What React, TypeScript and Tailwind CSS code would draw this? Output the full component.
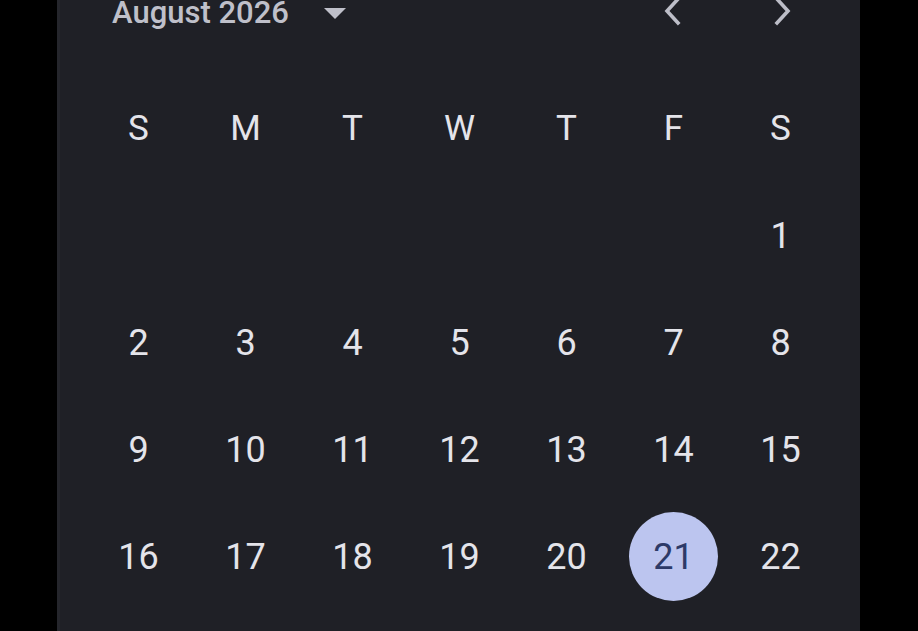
const weekDays = ['S', 'M', 'T', 'W', 'T', 'F', 'S']

// August 2026 starts on a Saturday; only the weeks that fit on screen
const cells: (number | null)[] = [
  ...Array(6).fill(null),
  ...Array.from({ length: 22 }, (_, i) => i + 1),
]

const selected = 21

function Chevron({ dir }: { dir: 'left' | 'right' }) {
  return (
    <svg className="-mt-[4px]" width="24" height="30" viewBox="0 0 24 30" fill="none">
      <polyline
        points={dir === 'left' ? '16,3 5,15 16,27' : '8,3 19,15 8,27'}
        stroke="#bdbec8"
        strokeWidth="3.6"
        strokeLinecap="square"
        strokeLinejoin="miter"
      />
    </svg>
  )
}

export default function App() {
  return (
    <div className="h-screen w-full overflow-hidden bg-black" style={{ fontFamily: 'Roboto, "Noto Sans", sans-serif' }}>
      <div className="ml-[57px] h-full w-[803px] border-l-[3px] border-[#25262c] bg-[#1f2026] pl-[25px] pr-[26px]">
        <div className="grid h-[24px] grid-cols-7 items-center">
          <div className="col-span-5 flex items-center pl-[27px]">
            <span className="-mt-[1px] text-[31px] font-medium leading-[24px] text-[#bfc0ca]">August 2026</span>
            <svg className="ml-[35px] mt-[1px]" width="22" height="11" viewBox="0 0 22 11">
              <polygon points="0,0 22,0 11,11" fill="#bfc0ca" />
            </svg>
          </div>
          <div className="flex justify-center">
            <Chevron dir="left" />
          </div>
          <div className="flex justify-center">
            <Chevron dir="right" />
          </div>
        </div>

        <div className="mt-[51px] grid grid-cols-7">
          {weekDays.map((d, i) => (
            <div key={i} className="flex h-[107px] items-center justify-center pt-[2px] text-[35px] text-[#e4e4ea]">
              {d}
            </div>
          ))}
          {cells.map((n, i) => (
            <div key={i} className="flex h-[107px] items-center justify-center">
              {n !== null &&
                (n === selected ? (
                  <div className="flex h-[89px] w-[89px] items-center justify-center rounded-full bg-[#bcc5ef] text-[36px] text-[#2d3a68]">
                    {n}
                  </div>
                ) : (
                  <span className="text-[36px] text-[#e4e4ea]">{n}</span>
                ))}
            </div>
          ))}
        </div>
      </div>
    </div>
  )
}
